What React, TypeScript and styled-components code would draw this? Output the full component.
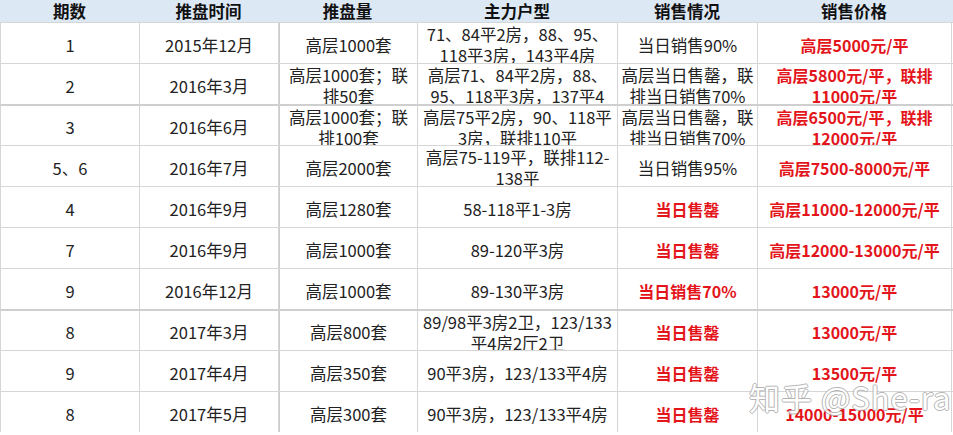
import * as React from "react";
import styled, { createGlobalStyle } from "styled-components";

const GlobalStyle = createGlobalStyle`
  html, body {
    margin: 0;
    padding: 0;
    background: #ffffff;
  }
  body {
    font-family: "Noto Sans CJK SC", "Liberation Sans", sans-serif;
    color: #222222;
  }
`;

const COLS = "139px 139px 139px 200px 140px 194px";

const Sheet = styled.div`
  position: relative;
  width: 953px;
  height: 435px;
  overflow: hidden;
  background: #ffffff;
`;

const HeaderRow = styled.div`
  display: grid;
  grid-template-columns: ${COLS};
  height: 22px;
  background: #dde8f5;
`;

const HeadCell = styled.div`
  display: flex;
  align-items: center;
  justify-content: center;
  font-size: 16.5px;
  font-weight: 700;
  color: #111111;
  line-height: 22px;
`;

const Row = styled.div<{ $thick?: boolean }>`
  display: grid;
  grid-template-columns: ${COLS};
  height: 41px;
  box-sizing: border-box;
  border-top: ${(p) => (p.$thick ? "2px solid #cfcfcf" : "1px solid #d6d6d6")};
  border-left: 1px solid #d6d6d6;
  &:last-child {
    border-bottom: 1px solid #d6d6d6;
    height: 42px;
  }
`;

const Cell = styled.div<{ $red?: boolean; $thickLeft?: boolean }>`
  display: flex;
  align-items: center;
  justify-content: center;
  text-align: center;
  overflow: hidden;
  box-sizing: border-box;
  padding-top: 4px;
  border-right: 1px solid #d6d6d6;
  border-left: ${(p) => (p.$thickLeft ? "1px solid #cccccc" : "none")};
  font-size: ${(p) => (p.$red ? "16px" : "16.5px")};
  line-height: 21px;
  white-space: nowrap;
  color: ${(p) => (p.$red ? "#e3151b" : "#222222")};
  font-weight: ${(p) => (p.$red ? 700 : 400)};
`;

const Watermark = styled.div`
  position: absolute;
  left: 749px;
  top: 374px;
  font-family: "Noto Sans CJK SC", "DejaVu Sans", sans-serif;
  font-weight: 400;
  font-size: 31px;
  letter-spacing: 1px;
  color: #ffffff;
  opacity: 0.85;
  text-shadow: 1px 0 #a8a8a8, -1px 0 #a8a8a8, 0 1px #a8a8a8, 0 -1px #a8a8a8;
  pointer-events: none;
  white-space: nowrap;
`;

type Line = string[];

interface RowData {
  no: string;
  time: string;
  amount: Line;
  types: Line;
  sales: Line;
  salesRed?: boolean;
  price: Line;
  thick?: boolean;
}

const headers = ["期数", "推盘时间", "推盘量", "主力户型", "销售情况", "销售价格"];

const rows: RowData[] = [
  {
    no: "1",
    time: "2015年12月",
    amount: ["高层1000套"],
    types: ["71、84平2房，88、95、", "118平3房，143平4房"],
    sales: ["当日销售90%"],
    price: ["高层5000元/平"],
  },
  {
    no: "2",
    time: "2016年3月",
    amount: ["高层1000套；联", "排50套"],
    types: ["高层71、84平2房，88、", "95、118平3房，137平4"],
    sales: ["高层当日售罄，联", "排当日销售70%"],
    price: ["高层5800元/平，联排", "11000元/平"],
  },
  {
    no: "3",
    time: "2016年6月",
    amount: ["高层1000套；联", "排100套"],
    types: ["高层75平2房，90、118平", "3房，联排110平"],
    sales: ["高层当日售罄，联", "排当日销售70%"],
    price: ["高层6500元/平，联排", "12000元/平"],
    thick: true,
  },
  {
    no: "5、6",
    time: "2016年7月",
    amount: ["高层2000套"],
    types: ["高层75-119平，联排112-", "138平"],
    sales: ["当日销售95%"],
    price: ["高层7500-8000元/平"],
  },
  {
    no: "4",
    time: "2016年9月",
    amount: ["高层1280套"],
    types: ["58-118平1-3房"],
    sales: ["当日售罄"],
    salesRed: true,
    price: ["高层11000-12000元/平"],
  },
  {
    no: "7",
    time: "2016年9月",
    amount: ["高层1000套"],
    types: ["89-120平3房"],
    sales: ["当日售罄"],
    salesRed: true,
    price: ["高层12000-13000元/平"],
  },
  {
    no: "9",
    time: "2016年12月",
    amount: ["高层1000套"],
    types: ["89-130平3房"],
    sales: ["当日销售70%"],
    salesRed: true,
    price: ["13000元/平"],
  },
  {
    no: "8",
    time: "2017年3月",
    amount: ["高层800套"],
    types: ["89/98平3房2卫，123/133", "平4房2厅2卫"],
    sales: ["当日售罄"],
    salesRed: true,
    price: ["13000元/平"],
    thick: true,
  },
  {
    no: "9",
    time: "2017年4月",
    amount: ["高层350套"],
    types: ["90平3房，123/133平4房"],
    sales: ["当日售罄"],
    salesRed: true,
    price: ["13500元/平"],
  },
  {
    no: "8",
    time: "2017年5月",
    amount: ["高层300套"],
    types: ["90平3房，123/133平4房"],
    sales: ["当日售罄"],
    salesRed: true,
    price: ["14000-15000元/平"],
  },
];

const Lines = ({ lines }: { lines: Line }) => (
  <span>
    {lines.map((l, i) => (
      <React.Fragment key={i}>
        {i > 0 && <br />}
        {l}
      </React.Fragment>
    ))}
  </span>
);

const App = () => {
  return (
    <>
      <GlobalStyle />
      <Sheet>
        <HeaderRow>
          {headers.map((h) => (
            <HeadCell key={h}>{h}</HeadCell>
          ))}
        </HeaderRow>
        {rows.map((r, i) => (
          <Row key={i} $thick={r.thick}>
            <Cell>{r.no}</Cell>
            <Cell>{r.time}</Cell>
            <Cell $thickLeft>
              <Lines lines={r.amount} />
            </Cell>
            <Cell>
              <Lines lines={r.types} />
            </Cell>
            <Cell $red={r.salesRed}>
              <Lines lines={r.sales} />
            </Cell>
            <Cell $red>
              <Lines lines={r.price} />
            </Cell>
          </Row>
        ))}
        <Watermark>知乎 @She-ra</Watermark>
      </Sheet>
    </>
  );
};

export default App;
